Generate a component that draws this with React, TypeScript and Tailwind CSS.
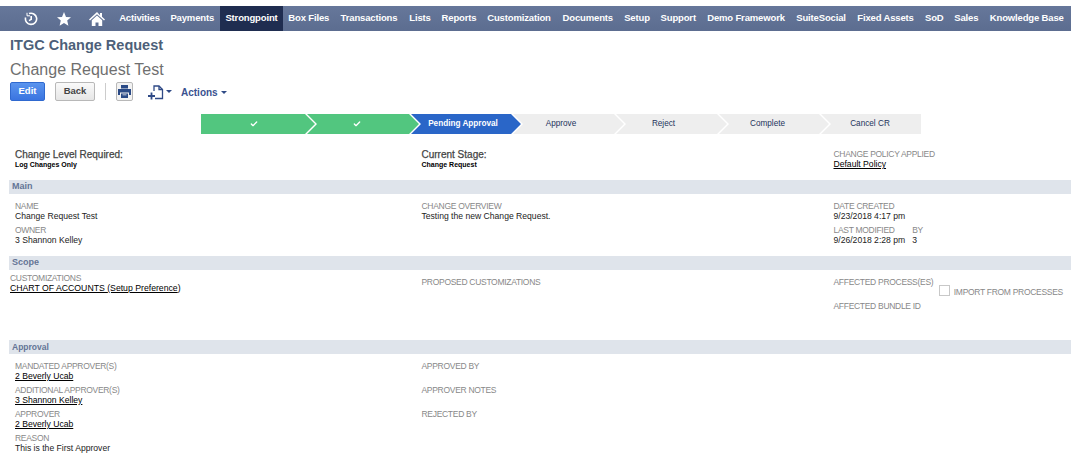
import { Check } from "lucide-react";

const navItems = [
  { name: "Activities", w: "w-[50px]" },
  { name: "Payments", w: "w-[55.5px]" },
  { name: "Strongpoint", w: "w-[63px] bg-[#1f2d50]" },
  { name: "Box Files", w: "w-[51.5px]" },
  { name: "Transactions", w: "w-[69px]" },
  { name: "Lists", w: "w-[33px]" },
  { name: "Reports", w: "w-[45px]" },
  { name: "Customization", w: "w-[75px]" },
  { name: "Documents", w: "w-[62.5px]" },
  { name: "Setup", w: "w-[36px]" },
  { name: "Support", w: "w-[46.5px]" },
  { name: "Demo Framework", w: "w-[89px]" },
  { name: "SuiteSocial", w: "w-[61px]" },
  { name: "Fixed Assets", w: "w-[68px]" },
  { name: "SoD", w: "w-[29.5px]" },
  { name: "Sales", w: "w-[34.5px]" },
  { name: "Knowledge Base", w: "w-[86.5px]" },
];

function Navbar() {
  return (
    <nav className="mt-[6px] h-[25px] flex items-stretch bg-gradient-to-b from-[#66779a] to-[#5c6d90]">
      <div className="w-[114.5px] shrink-0 flex items-center text-white">
        {/* History */}
        <svg className="ml-[24px] w-[14px] h-[14px]" viewBox="0 0 14 14" fill="none" stroke="currentColor" strokeWidth="1.6">
          <path d="M5 1.600A5.600 5.600 0 1 1 1.600 5.500" />
          <path d="M7.200 4v3.400L5 8.600" />
          <path d="M3 .8v3h3" strokeWidth="1" />
        </svg>
        {/* Star */}
        <svg className="ml-[19px] w-[14px] h-[14px]" viewBox="0 0 14 14" fill="currentColor">
          <path d="M7 0l2 4.900 5 .4-3.800 3.300 1.200 5.100L7 11l-4.400 2.700 1.200-5.100L0 5.300l5-.4z" />
        </svg>
        {/* Home */}
        <svg className="ml-[18px] w-[16px] h-[16px]" viewBox="0 0 16 16" fill="currentColor">
          <path d="M8 1L0 8.500l1 1L8 3.200l7 6.300 1-1-3-2.700V2h-2v2.200z" />
          <path d="M8 4.600l-5.200 4.700V15H6.500v-3.500h3V15h3.700V9.300z" />
        </svg>
      </div>
      {navItems.map((item) => (
        <a
          key={item.name}
          className={`${item.w} shrink-0 flex items-center justify-center text-white text-[9.5px] tracking-[-0.15px] font-bold whitespace-nowrap`}
        >
          {item.name}
        </a>
      ))}
    </nav>
  );
}

const steps = [
  { label: "", done: true, w: "w-[114px]", cls: "pr-[8px] bg-[#52c67f] text-white", first: true },
  { label: "", done: true, w: "w-[112px]", cls: "pr-[12px] bg-[#52c67f] text-white" },
  { label: "Pending Approval", w: "w-[110px]", cls: "pr-[6px] bg-[#2a66c8] text-white font-bold" },
  { label: "Approve", w: "w-[111px]", cls: "pr-[15px] bg-[#eeeeee] text-[#24345c]" },
  { label: "Reject", w: "w-[111px]", cls: "pr-[16px] bg-[#eeeeee] text-[#24345c]" },
  { label: "Complete", w: "w-[110px]", cls: "pr-[13px] bg-[#eeeeee] text-[#24345c]" },
  { label: "Cancel CR", w: "w-[100px]", cls: "pr-[2px] bg-[#eeeeee] text-[#24345c]", last: true },
];

function Stepper() {
  return (
    <div className="mt-[14px] ml-[201px] w-[720px] h-[20px] flex">
      {steps.map((s, i) => (
        <div
          key={i}
          className={`${s.w} ${s.cls} shrink-0 h-full flex items-center justify-center text-[8.2px] ${
            i > 0 ? "-ml-[8px]" : ""
          } ${
            s.first
              ? "[clip-path:polygon(0_0,calc(100%-10px)_0,100%_50%,calc(100%-10px)_100%,0_100%)]"
              : s.last
                ? "[clip-path:polygon(0_0,100%_0,100%_100%,0_100%,10px_50%)]"
                : "[clip-path:polygon(0_0,calc(100%-10px)_0,100%_50%,calc(100%-10px)_100%,0_100%,10px_50%)]"
          }`}
        >
          {s.done ? <Check className="w-[8px] h-[8px]" strokeWidth={4} /> : s.label}
        </div>
      ))}
    </div>
  );
}

function Field({ label, value, link, className }: { label: string; value?: string; link?: boolean; className?: string }) {
  return (
    <div className={`h-[24px] leading-[10px] ${className ?? ""}`}>
      <div className="text-[8.5px] tracking-[-0.3px] text-[#888888] leading-[10px] whitespace-nowrap">{label}</div>
      {value && (
        <div className={`text-[8.6px] leading-[10px] text-[#222222] whitespace-nowrap ${link ? "underline text-black" : ""}`}>
          {value}
        </div>
      )}
    </div>
  );
}

function SectionBar({ title, className }: { title: string; className?: string }) {
  return (
    <div className={`ml-[9px] h-[14px] flex items-center pl-[3px] bg-[#dfe4eb] font-bold text-[#647596] ${className ?? "text-[9px]"}`}>
      {title}
    </div>
  );
}

export default function App() {
  return (
    <div className="w-[1071px] h-[459px] overflow-hidden bg-white font-['Liberation_Sans',Arial,sans-serif]">
      <Navbar />

      <div className="pl-[10px]">
        <h1 className="mt-[6px] text-[14.5px] leading-[16px] font-bold text-[#4d5f79]">ITGC Change Request</h1>
        <h2 className="mt-[8px] text-[16px] leading-[18px] text-[#6f6f6f]">Change Request Test</h2>

        {/* Toolbar */}
        <div className="mt-[3px] h-[18px] flex items-center">
          <button className="w-[35px] h-[19px] rounded-[2px] border border-[#2f69cf] bg-gradient-to-b from-[#5a94ee] to-[#3a74e0] text-white text-[9.5px] font-bold">
            Edit
          </button>
          <button className="ml-[10px] w-[40px] h-[19px] rounded-[2px] border border-[#b8b8b8] bg-gradient-to-b from-[#fafafa] to-[#e6e6e6] text-[#444444] text-[9.5px] font-bold">
            Back
          </button>
          <div className="ml-[10px] w-px h-[17px] bg-[#cccccc]" />
          <button className="ml-[10px] w-[17px] h-[19px] rounded-[2px] border border-[#b8b8b8] bg-[#f2f2f2] flex items-center justify-center text-[#2a4a86]">
            <svg className="w-[13px] h-[13px]" viewBox="0 0 13 13" fill="currentColor">
              <path d="M3 0h7v3.500H3zM0 4h13v6h-2V7.500H2V10H0z" />
              <path d="M3 8.500h7V13H3zm1.500 1v.8h4v-.8z" fillRule="evenodd" />
            </svg>
          </button>
          <svg className="ml-[15px] mt-[2px] w-[16px] h-[15px] text-[#2f4a86]" viewBox="0 0 16 15" fill="none" stroke="currentColor" strokeWidth="1.3">
            <path d="M6 6V1h5l3.500 3.500V13.500H7" />
            <path d="M11 1v3.500h3.500" />
            <path d="M3.500 7.500v7M0 11h7" strokeWidth="1.800" />
          </svg>
          <span className="ml-[2px] mt-[1px] w-0 h-0 border-x-[3px] border-x-transparent border-t-[3px] border-t-[#2f4a86]" />
          <span className="ml-[9px] mt-[2px] text-[10px] font-bold text-[#3a5290]">Actions</span>
          <span className="ml-[3px] mt-[2px] w-0 h-0 border-x-[3px] border-x-transparent border-t-[3px] border-t-[#2f4a86]" />
        </div>
      </div>

      <Stepper />

      {/* Summary */}
      <div className="mt-[15px] h-[31px] grid grid-cols-[421.5px_412px_1fr]">
        <div className="pl-[15px]">
          <div className="text-[10px] leading-[12px] text-[#444444] [-webkit-text-stroke:0.25px_#444444]">Change Level Required:</div>
          <div className="text-[7px] leading-[8px] font-bold text-black">Log Changes Only</div>
        </div>
        <div>
          <div className="text-[10px] leading-[12px] text-[#444444] [-webkit-text-stroke:0.25px_#444444]">Current Stage:</div>
          <div className="text-[7px] leading-[8px] font-bold text-black">Change Request</div>
        </div>
        <Field label="CHANGE POLICY APPLIED" value="Default Policy" link />
      </div>

      <SectionBar title="Main" />
      <div className="mt-[7px] h-[55px] grid grid-cols-[421.5px_412px_1fr]">
        <div className="pl-[15px]">
          <Field label="NAME" value="Change Request Test" />
          <Field label="OWNER" value="3 Shannon Kelley" />
        </div>
        <Field label="CHANGE OVERVIEW" value="Testing the new Change Request." />
        <div>
          <Field label="DATE CREATED" value="9/23/2018 4:17 pm" />
          <div className="flex gap-[7px]">
            <Field label="LAST MODIFIED" value="9/26/2018 2:28 pm" />
            <Field label="BY" value="3" />
          </div>
        </div>
      </div>

      <SectionBar title="Scope" />
      <div className="mt-[3px] h-[67px] grid grid-cols-[421.5px_412px_1fr]">
        <div className="pl-[10px]">
          <div className="text-[8.5px] tracking-[-0.3px] text-[#888888] leading-[10px]">CUSTOMIZATIONS</div>
          <div className="text-[8.7px] leading-[10px] text-black">
            <span className="underline">CHART OF ACCOUNTS </span>
            <span className="underline">(Setup Preference</span>)
          </div>
        </div>
        <div className="mt-[4px]">
          <Field label="PROPOSED CUSTOMIZATIONS" />
        </div>
        <div className="mt-[4px]">
          <div className="flex h-[24px]">
            <Field label="AFFECTED PROCESS(ES)" />
            <div className="ml-[6px] mt-[8px] flex items-start">
              <span className="w-[11px] h-[11px] border border-[#c8c8c8] bg-white" />
              <span className="ml-[3.5px] mt-[2px] text-[8.5px] tracking-[-0.3px] leading-[10px] text-[#888888] whitespace-nowrap">IMPORT FROM PROCESSES</span>
            </div>
          </div>
          <Field label="AFFECTED BUNDLE ID" />
        </div>
      </div>

      <SectionBar title="Approval" className="text-[8.5px]" />
      <div className="mt-[7px] grid grid-cols-[421.5px_1fr]">
        <div className="pl-[15px]">
          <Field label="MANDATED APPROVER(S)" value="2 Beverly Ucab" link />
          <Field label="ADDITIONAL APPROVER(S)" value="3 Shannon Kelley" link />
          <Field label="APPROVER" value="2 Beverly Ucab" link />
          <Field label="REASON" value="This is the First Approver" />
        </div>
        <div>
          <Field label="APPROVED BY" />
          <Field label="APPROVER NOTES" />
          <Field label="REJECTED BY" />
        </div>
      </div>
    </div>
  );
}
